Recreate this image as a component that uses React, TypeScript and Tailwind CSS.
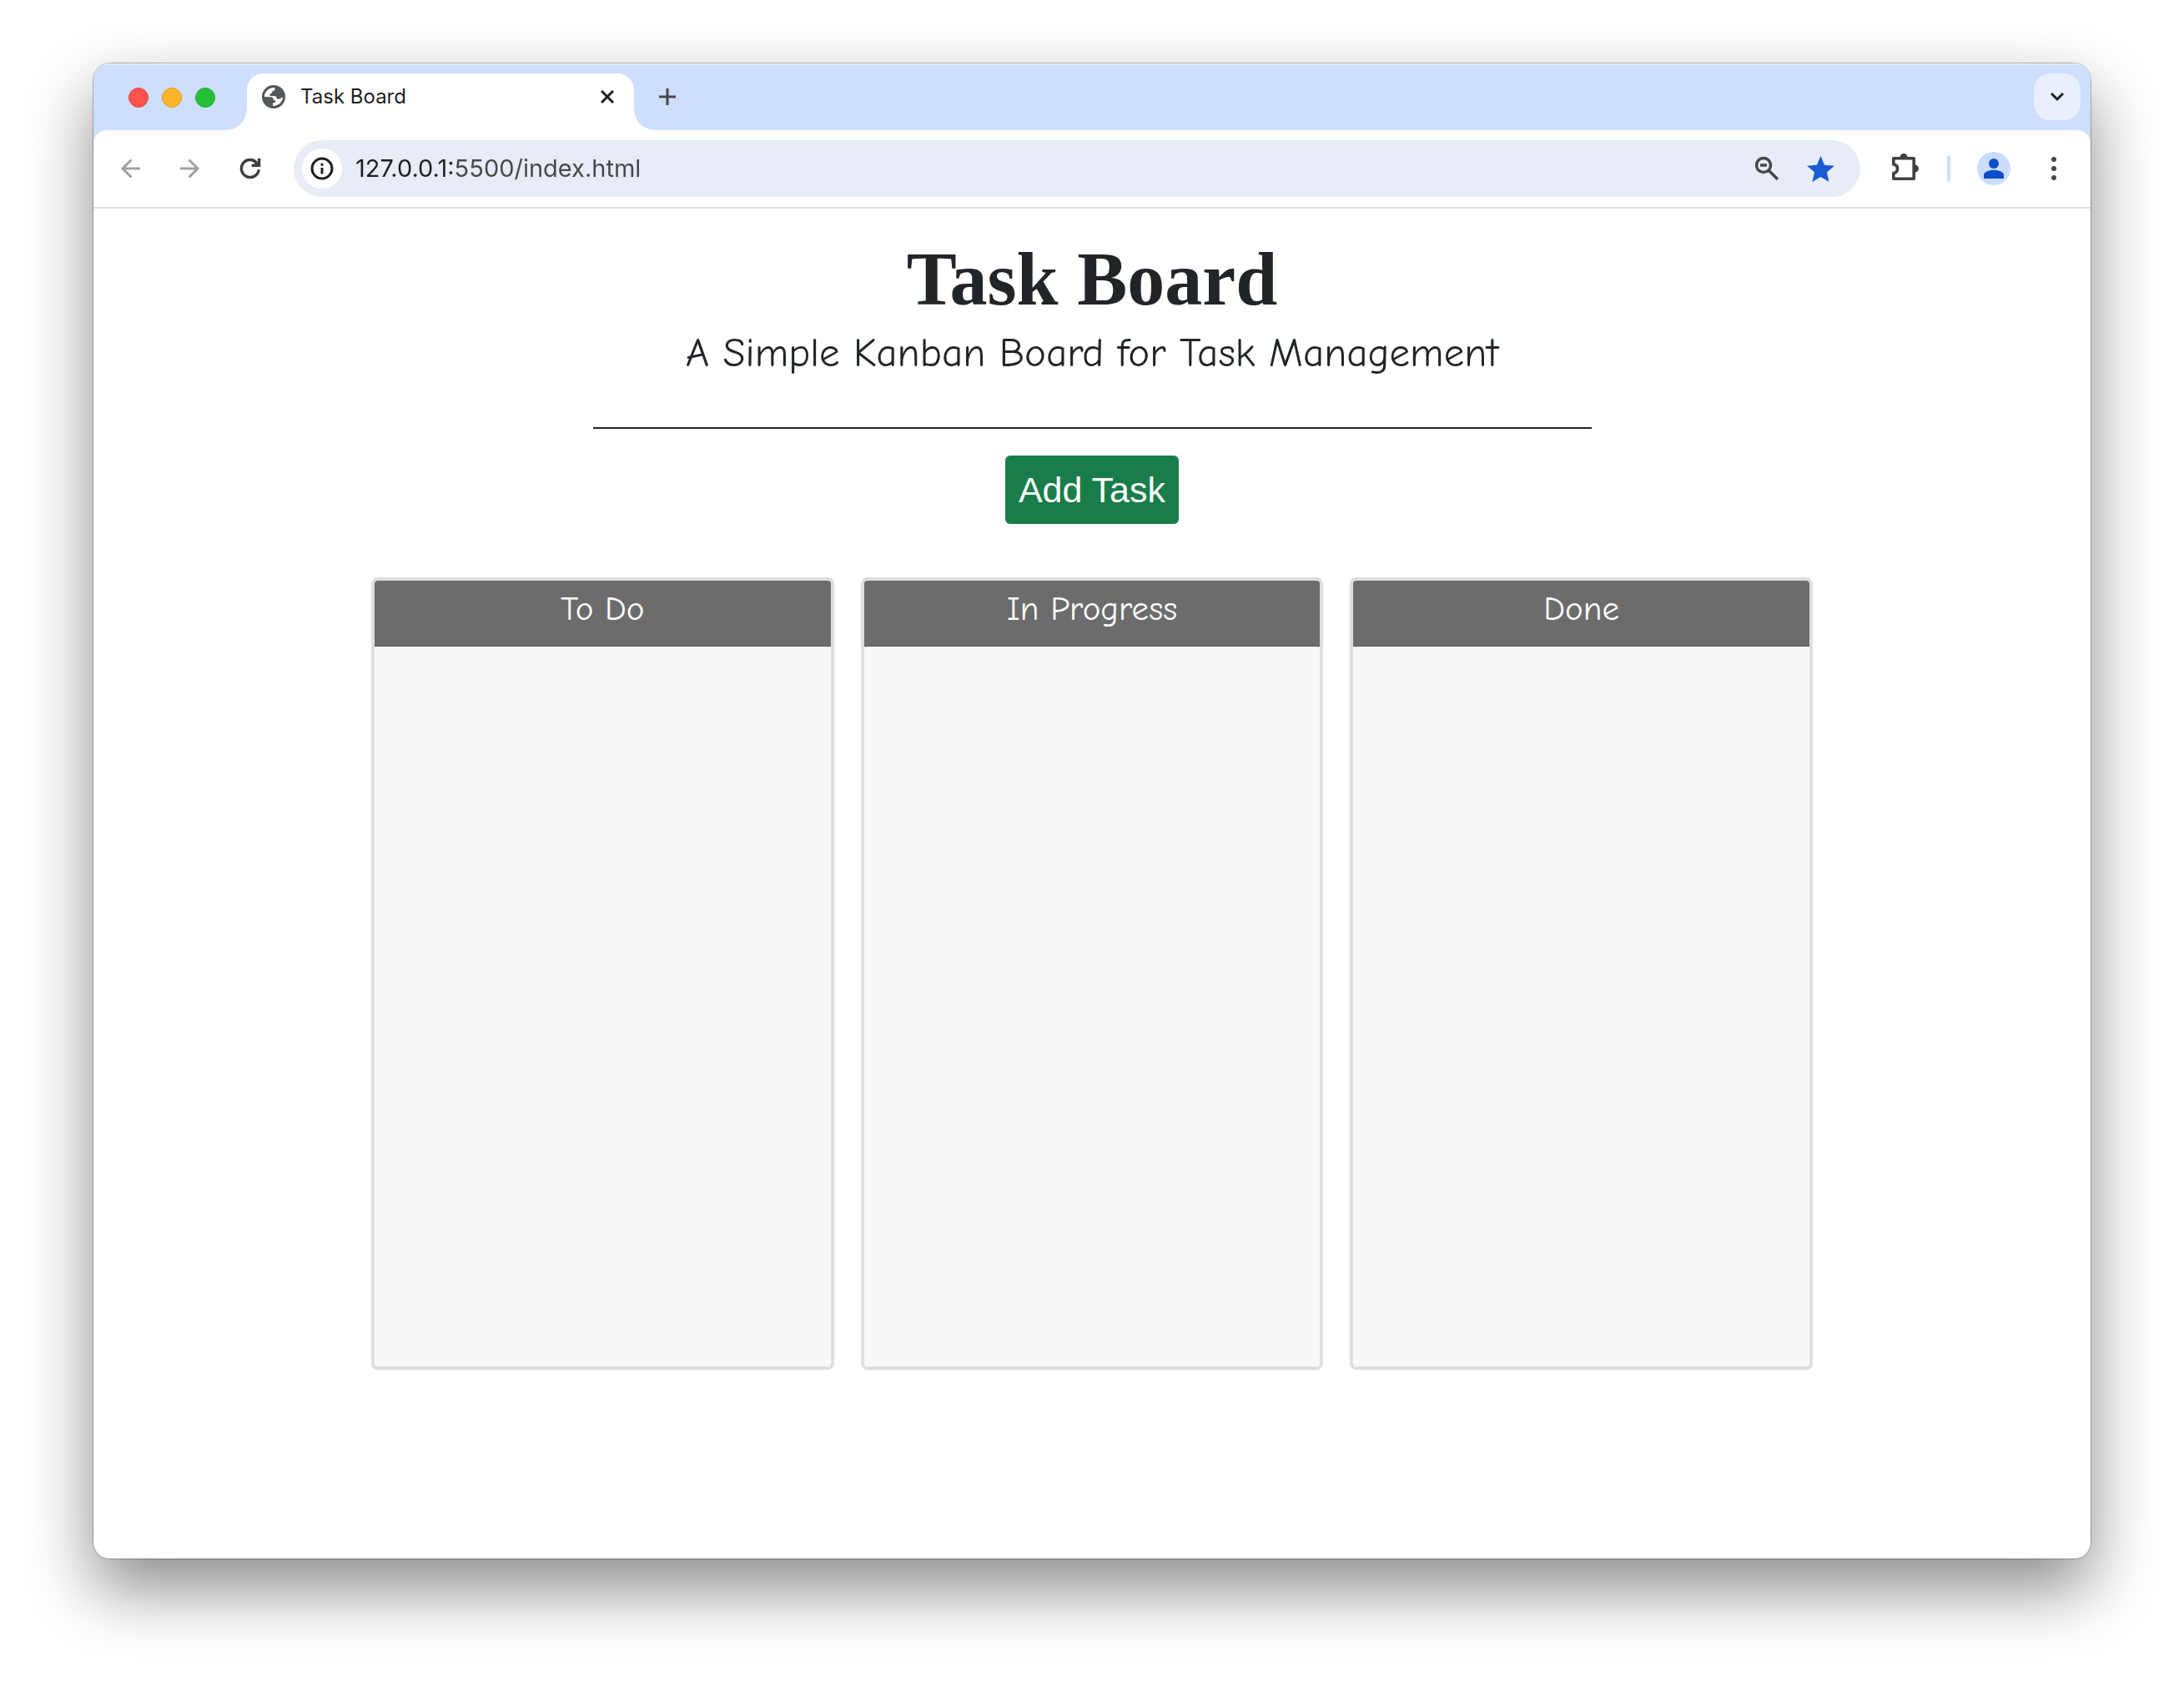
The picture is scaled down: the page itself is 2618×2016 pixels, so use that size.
import type { ReactNode } from "react";

const columns = [
  { id: "todo", title: "To Do" },
  { id: "in-progress", title: "In Progress" },
  { id: "done", title: "Done" },
];

function IconButton({ label, className = "", children }: { label: string; className?: string; children: ReactNode }) {
  return (
    <button type="button" aria-label={label} className={`flex size-14 shrink-0 items-center justify-center rounded-full ${className}`}>
      {children}
    </button>
  );
}

function Globe() {
  return (
    <svg viewBox="0 0 28 28" className="size-7 shrink-0" aria-hidden="true">
      <circle cx="14" cy="14" r="14" fill="#54575b" />
      <path
        fill="#fff"
        d="M3 14C3 8 8 3 14.500 3L15.500 3.500C16 6 14.500 7 12.500 7.300C12.500 9.500 11.500 10 9.500 10.500V13H14.500C17 13 17.500 14.500 18 16.500C20.500 17 22.500 16.500 25 14.300C25 20 20 25 13 25V21.500C15.500 21.500 16.500 20.500 16.500 18.500C14.500 18.500 13.500 18 13.500 16C13 14.500 11.500 14.200 10 14.200Z"
      />
      <path fill="#54575b" d="M15.500 3.500C20 4 24 8 25 13.500C22 14 20.500 12.500 19.500 11.500C17.500 12 15.500 11.500 15.500 9.500C15.500 8 16.500 7.500 17 6Z" />
    </svg>
  );
}

function TabStrip() {
  return (
    <div className="flex h-20 items-end bg-[#cedefd] shadow-[inset_0_2px_0_rgba(255,255,255,0.4)]">
      <div className="mb-[27px] ml-[42px] flex gap-4">
        <button type="button" aria-label="Close window" className="size-6 rounded-full border border-[#df4744] bg-[#ff544d]" />
        <button type="button" aria-label="Minimize window" className="size-6 rounded-full border border-[#dd9b24] bg-[#ffb429]" />
        <button type="button" aria-label="Zoom window" className="size-6 rounded-full border border-[#1cab2e] bg-[#24c138]" />
      </div>
      <div className="relative ml-[38px] flex h-[68px] w-[464px] items-center rounded-t-[20px] bg-white pr-[14px] pb-3 pl-[18px]">
        <span className="absolute bottom-0 -left-6 size-6 bg-[radial-gradient(circle_at_0_0,transparent_23px,white_24px)]" />
        <span className="absolute -right-6 bottom-0 size-6 bg-[radial-gradient(circle_at_100%_0,transparent_23px,white_24px)]" />
        <Globe />
        <span className="ml-[18px] flex-1 font-['Inter'] text-[24px] leading-7 text-[#1f1f1f]">Task Board</span>
        <button type="button" aria-label="Close tab" className="flex size-9 items-center justify-center">
          <svg viewBox="0 0 16 16" className="size-4" fill="none" stroke="#1f1f1f" strokeWidth="3">
            <path d="M1 1 15 15M15 1 1 15" />
          </svg>
        </button>
      </div>
      <button type="button" aria-label="New tab" className="mb-3 ml-3 flex size-14 items-center justify-center">
        <svg viewBox="0 0 20 20" className="size-5" fill="none" stroke="#474747" strokeWidth="3">
          <path d="M10 0V20M0 10H20" />
        </svg>
      </button>
      <button type="button" aria-label="Search tabs" className="mr-3 mb-3 ml-auto flex size-14 items-center justify-center rounded-[20px] bg-[#e8f0fe]">
        <svg viewBox="0 0 18 12" className="h-3 w-[18px]" fill="none" stroke="#1f1f1f" strokeWidth="3">
          <path d="M2 2 9 9 16 2" />
        </svg>
      </button>
    </div>
  );
}

function Toolbar() {
  return (
    <div className="bg-[#cedefd]">
      <div className="flex h-[94px] items-center rounded-t-2xl border-b-2 border-[#dedfe0] bg-white px-4">
        <nav aria-label="History" className="flex gap-4">
          <IconButton label="Back">
            <svg viewBox="0 0 24 24" className="size-6" fill="none" stroke="#a1a1a1" strokeWidth="3">
              <path d="M24 12H2M13.500 1.500 3 12 13.500 22.500" />
            </svg>
          </IconButton>
          <IconButton label="Forward">
            <svg viewBox="0 0 24 24" className="size-6" fill="none" stroke="#a1a1a1" strokeWidth="3">
              <path d="M0 12H22M10.500 1.500 21 12 10.500 22.500" />
            </svg>
          </IconButton>
          <IconButton label="Reload">
            <svg viewBox="0 0 28 28" className="size-7" fill="none" stroke="#3f3f3f" strokeWidth="3.400">
              <path d="M24.300 15.300A10.500 10.500 0 1 1 21.500 6.800" />
              <path d="M24.600 1.800V10.200H15.700M19 5 24 10" />
            </svg>
          </IconButton>
        </nav>
        <div className="ml-6 flex h-[68px] flex-1 items-center rounded-full bg-[#e8ecf6] pr-5 pl-[10px]">
          <button type="button" aria-label="View site information" className="flex size-12 shrink-0 items-center justify-center rounded-full bg-white">
            <svg viewBox="0 0 28 28" className="size-7" fill="none" stroke="#1f1f1f" strokeWidth="3">
              <circle cx="14" cy="14" r="12" />
              <path d="M14 13V20.500M14 7.800V10.800" />
            </svg>
          </button>
          <input
            aria-label="Address"
            defaultValue="127.0.0.1:5500/index.html"
            className="ml-4 min-w-0 flex-1 bg-[linear-gradient(to_right,#1f1f1f_120px,#474747_120px)] bg-clip-text font-['Inter'] text-[29px] leading-10 text-transparent outline-none"
          />
          <button type="button" aria-label="Zoom" className="flex size-14 items-center justify-center">
            <svg viewBox="0 0 28 28" className="size-7" fill="none" stroke="#474747" strokeWidth="3.400">
              <circle cx="10" cy="10" r="8.500" />
              <path d="M16 16 27 27M6 10H14" />
            </svg>
          </button>
          <button type="button" aria-label="Bookmark this tab" className="ml-2 flex size-14 items-center justify-center">
            <svg viewBox="2 2 20 19" className="h-[31px] w-[33px]" fill="#1a5bd0">
              <path d="M12 17.270 18.180 21l-1.640-7.030L22 9.240l-7.190-.61L12 2 9.190 8.630 2 9.240l5.460 4.730L5.820 21z" />
            </svg>
          </button>
        </div>
        <IconButton label="Extensions" className="ml-6">
          <svg viewBox="0 2 36 36" className="size-9" fill="none" stroke="#3f3f3f" strokeWidth="3.600" strokeLinejoin="round">
            <path fill="#3f3f3f" stroke="none" d="M13.500 6.500a4.500 4.500 0 0 1 9 0zM31.500 15.500a4.500 4.500 0 0 1 0 9z" />
            <path d="M7.800 7.800H30.200V32.200H5.800V25.500C9.200 25 10.500 23 10.500 20.200S9.200 15.500 5.800 15V7.800Z" />
          </svg>
        </IconButton>
        <span className="ml-6 h-8 w-1 shrink-0 rounded-full bg-[#cedefd]" />
        <IconButton label="Profile" className="ml-6">
          <svg viewBox="0 0 40 40" className="size-10">
            <circle cx="20" cy="20" r="20" fill="#cbddfc" />
            <circle cx="20" cy="14" r="6" fill="#0b4cc8" />
            <path fill="#0b4cc8" d="M8 32V28C8 24 14.500 21.800 20 21.800S32 24 32 28V32Z" />
          </svg>
        </IconButton>
        <IconButton label="Menu" className="ml-4">
          <svg viewBox="0 0 8 28" className="h-7 w-2" fill="#474747">
            <circle cx="4" cy="3" r="3" />
            <circle cx="4" cy="14" r="3" />
            <circle cx="4" cy="25" r="3" />
          </svg>
        </IconButton>
      </div>
    </div>
  );
}

function Board() {
  return (
    <main className="flex-1 pt-[35px] pb-12 text-center text-[#212529]">
      <h1 className="font-['Liberation_Serif'] text-[90px] leading-[100px] font-bold">Task Board</h1>
      <p className="mt-2 font-['Comic_Neue','Lato',sans-serif] text-[49px] leading-[60px]">A Simple Kanban Board for Task Management</p>
      <hr className="mx-auto mt-[59px] w-1/2 border-t-2 border-[#212529]" />
      <button type="button" className="mt-8 h-[82px] rounded-md bg-[#197d4a] px-4 font-['Liberation_Sans'] text-[43px] leading-[50px] text-white">
        Add Task
      </button>
      <div className="mx-auto mt-16 grid max-w-[1728px] grid-cols-3 gap-8">
        {columns.map((column) => (
          <section key={column.id} aria-labelledby={column.id} className="min-h-[950px] overflow-hidden rounded-lg border-4 border-[#dedede] bg-[#f7f8fa]">
            <h2
              id={column.id}
              className="border-b border-[#5c5859] bg-[#6c6c6c] pt-[10px] pb-5 font-['Comic_Neue','Lato',sans-serif] text-[41px] leading-[48px] text-white"
            >
              {column.title}
            </h2>
          </section>
        ))}
      </div>
    </main>
  );
}

export default function App() {
  return (
    <div className="flex min-h-screen bg-white px-28 pt-[76px] pb-[148px]">
      <div className="flex flex-1 flex-col rounded-[20px] shadow-[0_0_0_1px_rgba(0,0,0,0.25),0_36px_80px_rgba(0,0,0,0.46)]">
        <div className="flex flex-1 flex-col overflow-hidden rounded-[20px] bg-white">
          <TabStrip />
          <Toolbar />
          <Board />
        </div>
      </div>
    </div>
  );
}
